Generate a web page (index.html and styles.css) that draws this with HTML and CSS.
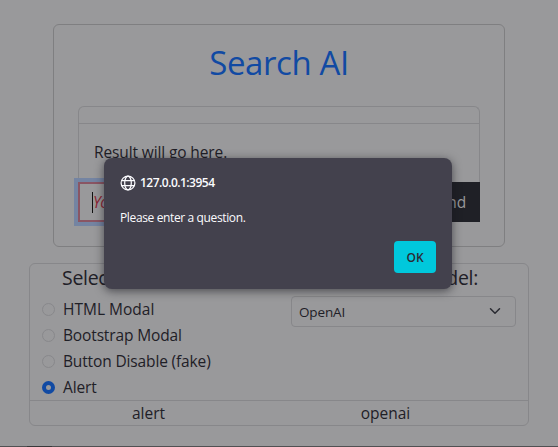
FILE: index.html
```html
<!DOCTYPE html>
<html lang="en">
<head>
<meta charset="utf-8">
<title>Search AI</title>
<link rel="stylesheet" href="styles.css">
</head>
<body>
<main class="page">
  <section class="search">
    <h1 class="title">Search AI</h1>
    <div class="result">
      <div class="result-header"></div>
      <p class="result-text">Result will go here.</p>
    </div>
    <div class="ask">
      <div class="field"><span class="caret"></span><span class="placeholder">Your question</span></div>
      <div class="send">Send</div>
    </div>
  </section>
  <section class="options">
    <div class="columns">
      <div class="column">
        <h2 class="heading heading-left">Select an Effect:</h2>
        <div class="choice"><span class="radio"></span><span class="label l-html">HTML Modal</span></div>
        <div class="choice"><span class="radio"></span><span class="label">Bootstrap Modal</span></div>
        <div class="choice"><span class="radio"></span><span class="label">Button Disable (fake)</span></div>
        <div class="choice"><span class="radio checked"></span><span class="label">Alert</span></div>
      </div>
      <div class="column">
        <h2 class="heading heading-right">Select a Model:</h2>
        <div class="select"><span>OpenAI</span>
          <svg class="chevron" viewBox="0 0 16 16"><path d="m2 5 6 6 6-6"/></svg>
        </div>
      </div>
    </div>
    <div class="footer"><span class="foot-alert">alert</span><span class="foot-ai">openai</span></div>
  </section>
  <div class="edge"></div>
</main>
<div class="dialog">
  <div class="origin">
    <svg class="globe" viewBox="0 0 16 16"><circle cx="8" cy="8" r="6.9"/><ellipse cx="8" cy="8" rx="3.3" ry="6.9"/><path d="M1.7 5.5h12.6M1.7 10.5h12.6"/></svg>
    <span class="host">127.0.0.1:3954</span>
  </div>
  <p class="message">Please enter a question.</p>
  <div class="ok"><span>OK</span></div>
</div>
</body>
</html>
```
FILE: styles.css
```css
* { box-sizing: border-box; }
body { margin: 0; background: #99999b; color: #1f2027; font: 15.5px/24px "Open Sans", "Noto Sans", sans-serif; letter-spacing: -.14px; overflow: hidden; }
h1, h2, p { margin: 0; font-weight: 400; }
.page { height: 447px; padding-top: 24px; display: flex; flex-direction: column; }
.search { width: 452px; height: 223px; margin-left: 53px; padding: 0 24px; border: 1px solid #7f7f81; border-radius: 6px; }
.title { margin-top: 14px; height: 48px; font-size: 33px; line-height: 48px; text-align: center; color: #114aa3; letter-spacing: -.4px; white-space: nowrap; }
.result { margin-top: 19px; height: 76px; border: 1px solid #87878a; border-bottom: 0; border-radius: 6px 6px 0 0; }
.result-header { height: 17px; border-bottom: 1px solid #87878a; }
.result-text { margin: 16px 0 0 15px; letter-spacing: -.12px; }
.ask { display: flex; height: 40px; }
.field { flex: 1; display: flex; align-items: center; padding-left: 12px; border: 2px solid #8a5563; box-shadow: 0 0 0 4px #7484a2; }
.caret { width: 1px; height: 21px; background: #111; }
.placeholder { font-style: italic; color: #8e2634; letter-spacing: -.5px; }
.send { width: 74px; background: #1f2026; color: #99999b; text-align: right; padding-right: 14px; line-height: 40px; }
.options { width: 500px; height: 163px; margin: 16px 0 0 29px; border: 1px solid #87878a; border-radius: 6px; }
.columns { display: flex; height: 136px; }
.column { width: 249px; padding: 0 12px; }
.heading { height: 32px; font-size: 19.5px; line-height: 27px; letter-spacing: -.3px; white-space: nowrap; }
.heading-left { padding-left: 20px; }
.heading-right { text-align: right; padding-right: 38px; }
.choice { height: 26px; display: flex; align-items: center; }
.radio { width: 13px; height: 13px; border: 1px solid #88888b; border-radius: 50%; margin-right: 8px; }
.radio.checked { border: 4px solid #114aa3; }
.label { white-space: nowrap; }
.l-html { letter-spacing: 0; }
.select { width: 225px; height: 31px; border: 1px solid #87878a; border-radius: 4px; display: flex; align-items: center; justify-content: space-between; padding: 0 14px 0 7px; font-size: 13.5px; }
.chevron { width: 12px; height: 12px; margin-bottom: 2px; fill: none; stroke: #292a31; stroke-width: 2; stroke-linecap: round; stroke-linejoin: round; }
.footer { height: 25px; border-top: 1px solid #87878a; display: flex; line-height: 25px; }
.footer span { width: 50%; text-align: center; letter-spacing: 0; }
.foot-alert { padding-right: 12px; }
.foot-ai { padding-right: 36px; }
.edge { height: 1px; margin-top: 20px; background: linear-gradient(90deg, #505052 27px, #38383a 27px 52px, #505052 52px); }
.dialog { position: absolute; left: 104px; top: 158px; width: 348px; height: 131px; padding: 16px; background: #43414d; border-radius: 8px; box-shadow: 0 2px 10px rgba(20, 20, 26, .6); color: #fbfbfe; display: flex; flex-direction: column; }
.origin { display: flex; align-items: center; height: 17px; gap: 4px; font-size: 12px; font-weight: 600; letter-spacing: -.52px; }
.globe { width: 16px; height: 16px; fill: none; stroke: #fbfbfe; stroke-width: 1.25; }
.message { margin-top: 18px; font-size: 12px; line-height: 18px; letter-spacing: -.37px; white-space: nowrap; }
.ok { margin: 14px 0 0 auto; width: 42px; height: 32px; border-radius: 4px; background: #00c8dc; color: #2b2a33; font-size: 12px; font-weight: 600; line-height: 33px; text-align: center; }
```
